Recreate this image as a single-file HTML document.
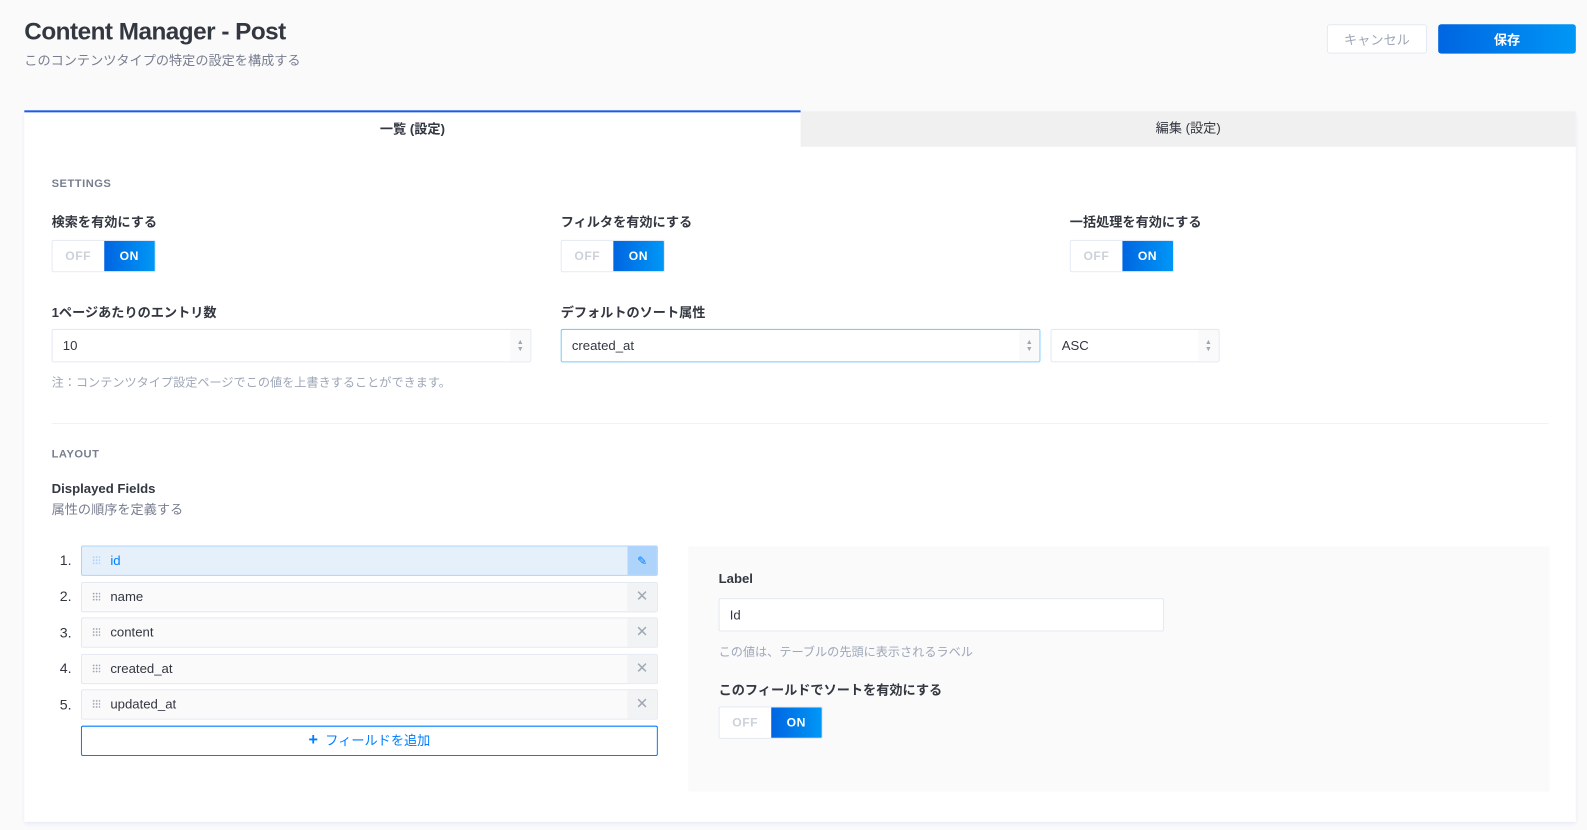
<!DOCTYPE html>
<html><head><meta charset="utf-8"><style>
*{box-sizing:border-box;margin:0;padding:0}
html,body{width:1587px;height:830px;overflow:hidden;background:#fafafb}
#w{position:absolute;left:0;top:0;width:1568px;height:820px;transform:scale(1.0121);transform-origin:0 0;font-family:"Liberation Sans","Noto Sans CJK JP",sans-serif;color:#333740}
.abs{position:absolute}
h1{position:absolute;left:24px;top:18px;font-size:24px;font-weight:bold;color:#333740;letter-spacing:-0.5px}
.sub{left:24px;top:49px;font-size:13px;color:#787e8f}
.btn{position:absolute;top:24px;height:29px;border-radius:3px;font-size:13px;display:flex;align-items:center;justify-content:center}
.cancel{left:1311px;width:99px;border:1px solid #e3e9f3;color:#9ea7b8;background:#fff}
.save{left:1421px;width:136px;background:linear-gradient(90deg,#0065e1,#0097f6);color:#fff;font-weight:bold}
.card{left:24px;top:110px;width:1533px;height:702px;background:#fff;box-shadow:0 2px 4px #e3e9f3}
.tab1{left:24px;top:109px;width:767px;height:36px;border-top:2px solid #1c5de7;background:#fff;font-size:13px;font-weight:bold;text-align:center;line-height:33px}
.tab2{left:791px;top:110px;width:766px;height:35px;background:#f0f0f0;font-size:13px;text-align:center;line-height:33px;color:#333740}
.sec{font-size:11px;font-weight:bold;color:#787e8f;letter-spacing:0.5px}
.lbl{font-size:13px;font-weight:bold;color:#333740}
.tog{position:absolute;width:103px;height:32px;border:1px solid #e3e9f3;border-radius:2px;display:flex;font-size:12px;font-weight:bold;overflow:hidden}
.tog span{flex:1;display:flex;align-items:center;justify-content:center;letter-spacing:0.5px}
.tog .off{color:#cdd2da;background:#fff}
.tog .on{color:#fff;background:linear-gradient(90deg,#0065e1,#0097f6)}
.sel{position:absolute;height:33px;border:1px solid #e3e9f3;border-radius:2px;font-size:13px;padding-left:10px;line-height:31px;background:#fff}
.sel .ar{position:absolute;right:0;top:0;width:20px;height:31px;background:#fafafb;font-size:7px;color:#a0a7b4;text-align:center;line-height:7px;padding-top:9px}
.note{font-size:12px;color:#9ea7b8}
.row{position:absolute;left:80px;width:570px;height:30px;border:1px solid #e3e9f3;background:#fafafb;border-radius:2px;font-size:13px}
.row .t{position:absolute;left:28px;top:6px}
.row .g{position:absolute;left:10px;top:9px;width:8px;height:9px;background-image:radial-gradient(circle,#a0a7b4 0.8px,transparent 1px);background-size:3px 3px}
.row .x{position:absolute;right:0;top:0;width:29px;height:28px;background:#f2f3f4;color:#a0a7b4;text-align:center;line-height:28px;font-size:15px}
.num{position:absolute;left:59px;font-size:14px;color:#333740}
</style></head><body><div id="w">
<h1>Content Manager - Post</h1>
<div class="abs sub">このコンテンツタイプの特定の設定を構成する</div>
<div class="btn cancel">キャンセル</div>
<div class="btn save">保存</div>
<div class="abs card"></div>
<div class="abs tab2">編集 (設定)</div>
<div class="abs tab1">一覧 (設定)</div>

<div class="abs sec" style="left:51px;top:176px">SETTINGS</div>
<div class="abs lbl" style="left:51px;top:209px">検索を有効にする</div>
<div class="abs lbl" style="left:554px;top:209px">フィルタを有効にする</div>
<div class="abs lbl" style="left:1057px;top:209px">一括処理を有効にする</div>
<div class="tog" style="left:51px;top:237px"><span class="off">OFF</span><span class="on">ON</span></div>
<div class="tog" style="left:554px;top:237px"><span class="off">OFF</span><span class="on">ON</span></div>
<div class="tog" style="left:1057px;top:237px"><span class="off">OFF</span><span class="on">ON</span></div>

<div class="abs lbl" style="left:51px;top:298px">1ページあたりのエントリ数</div>
<div class="abs lbl" style="left:554px;top:298px">デフォルトのソート属性</div>
<div class="sel" style="left:51px;top:325px;width:474px">10<div class="ar">▲<br>▼</div></div>
<div class="sel" style="left:554px;top:325px;width:474px;border-color:#78caff">created_at<div class="ar">▲<br>▼</div></div>
<div class="sel" style="left:1038px;top:325px;width:167px">ASC<div class="ar">▲<br>▼</div></div>
<div class="abs note" style="left:51px;top:369px">注：コンテンツタイプ設定ページでこの値を上書きすることができます。</div>
<div class="abs" style="left:51px;top:418px;width:1479px;height:1px;background:#f1f1f2"></div>

<div class="abs sec" style="left:51px;top:443px">LAYOUT</div>
<div class="abs lbl" style="left:51px;top:475px">Displayed Fields</div>
<div class="abs" style="left:51px;top:493px;font-size:13px;color:#787e8f">属性の順序を定義する</div>

<div class="num" style="top:545px">1.</div>
<div class="row" style="top:539px;background:#e6f0fb;border-color:#aed4fb;color:#007eff"><div class="g" style="background-image:radial-gradient(circle,#aed4fb 0.8px,transparent 1px)"></div><div class="t">id</div><div class="x" style="background:#aed4fb;color:#007eff;font-size:12px">✎</div></div>
<div class="num" style="top:581px">2.</div>
<div class="row" style="top:575px"><div class="g"></div><div class="t">name</div><div class="x">✕</div></div>
<div class="num" style="top:617px">3.</div>
<div class="row" style="top:610px"><div class="g"></div><div class="t">content</div><div class="x">✕</div></div>
<div class="num" style="top:652px">4.</div>
<div class="row" style="top:646px"><div class="g"></div><div class="t">created_at</div><div class="x">✕</div></div>
<div class="num" style="top:688px">5.</div>
<div class="row" style="top:681px"><div class="g"></div><div class="t">updated_at</div><div class="x">✕</div></div>
<div class="abs" style="left:80px;top:717px;width:570px;height:30px;border:1px solid #007eff;border-radius:2px;color:#007eff;font-size:13px;text-align:center;line-height:28px"><b style="font-size:16px">+</b>&nbsp; フィールドを追加</div>

<div class="abs" style="left:680px;top:540px;width:851px;height:242px;background:#fafafb"></div>
<div class="abs lbl" style="left:710px;top:564px">Label</div>
<div class="abs" style="left:710px;top:591px;width:440px;height:33px;border:1px solid #e3e9f3;background:#fff;border-radius:2px;font-size:13px;padding-left:10px;line-height:31px">Id</div>
<div class="abs note" style="left:710px;top:635px">この値は、テーブルの先頭に表示されるラベル</div>
<div class="abs lbl" style="left:710px;top:671px">このフィールドでソートを有効にする</div>
<div class="tog" style="left:710px;top:698px"><span class="off">OFF</span><span class="on">ON</span></div>
</div></body></html>
